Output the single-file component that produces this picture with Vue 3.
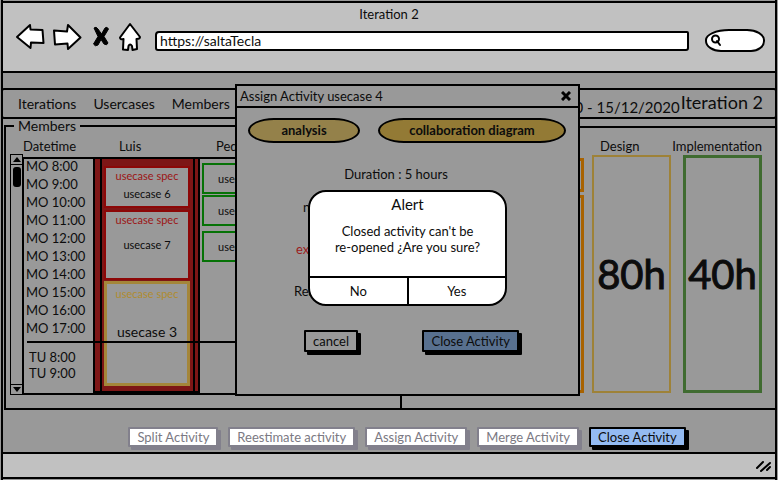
<script setup>
import { ref } from 'vue'

const url = ref('https://saltaTecla')
const query = ref('')

const links = ['Iterations', 'Usercases', 'Members']
const monday = [8, 9, 10, 11, 12, 13, 14, 15, 16, 17].map((h) => `MO ${h}:00`)
const tuesday = [8, 9].map((h) => `TU ${h}:00`)

const luis = [
  { kind: 'usecase spec', name: 'usecase 6', size: 'short' },
  { kind: 'usecase spec', name: 'usecase 7', size: 'medium' },
  { kind: 'usecase spec', name: 'usecase 3', size: 'long' },
]
const pedro = ['usecase 1', 'usecase 2', 'usecase 5']

const actions = [
  { label: 'Split Activity', enabled: false },
  { label: 'Reestimate activity', enabled: false },
  { label: 'Assign Activity', enabled: false },
  { label: 'Merge Activity', enabled: false },
  { label: 'Close Activity', enabled: true },
]
</script>

<template>
  <div class="window">
    <header class="chrome">
      <h1 class="chrome-title">Iteration 2</h1>
      <div class="toolbar">
        <button class="icon" type="button" aria-label="Back">
          <svg width="30" height="28" viewBox="0 0 30 28">
            <path d="M2 14 L15 2 L15.500 6.500 L27.500 7 L28.500 20 L16 19.500 L15.500 25 Z" />
          </svg>
        </button>
        <button class="icon" type="button" aria-label="Forward">
          <svg width="30" height="28" viewBox="0 0 30 28">
            <path d="M2 7.500 L15 8.500 L16 2 L28.500 14.500 L16 26 L15.500 20.500 L3 21.500 Z" />
          </svg>
        </button>
        <button class="icon stop" type="button" aria-label="Stop">
          <svg width="18" height="28" viewBox="0 0 18 28">
            <path
              class="solid"
              d="M2 5 Q4 3 6 6 L9.500 11 L13 5 Q15 3 16.500 6 L12 13.500 L16 20 Q15 23 12 21 L9 16.500 L6 22 Q3 24 1.500 21 L6 13.500 Z"
            />
          </svg>
        </button>
        <button class="icon" type="button" aria-label="Home">
          <svg width="24" height="30" viewBox="0 0 24 30">
            <path
              d="M12 2 L22 15 Q22 17 18.500 17 L19 27 L14.500 28 L14 24 Q12 21 10.500 24 L10 28 L5 27.500 L5.500 17 Q2 18 2 15.500 Z"
            />
          </svg>
        </button>
        <input v-model="url" class="url" type="text" aria-label="Address" />
        <label class="search">
          <svg width="12" height="14" viewBox="0 0 12 14">
            <circle cx="5.500" cy="5" r="3.500" />
            <path d="M7 7 L10 11" />
          </svg>
          <input v-model="query" type="search" aria-label="Search" />
        </label>
      </div>
    </header>

    <nav class="menu">
      <a v-for="link in links" :key="link" href="#">{{ link }}</a>
      <span class="dates">01/12/2020 - 15/12/2020</span>
      <strong class="iteration">Iteration 2</strong>
    </nav>

    <main class="panels">
      <fieldset class="members">
        <legend>Members</legend>
        <div class="heads">
          <span>Datetime</span>
          <span class="center">Luis</span>
          <span class="third">Pedro</span>
        </div>
        <div class="schedule">
          <div class="scrollbar">
            <span class="cap"><span class="arrow"></span></span>
            <span class="thumb"></span>
            <span class="cap bottom"><span class="arrow down"></span></span>
          </div>
          <div class="calendar">
            <div class="times">
              <ul class="monday">
                <li v-for="t in monday" :key="t">{{ t }}</li>
              </ul>
              <ul class="tuesday">
                <li v-for="t in tuesday" :key="t">{{ t }}</li>
              </ul>
            </div>
            <div class="luis">
              <div class="lane">
                <div v-for="c in luis" :key="c.name" class="card" :class="c.size">
                  <span class="kind">{{ c.kind }}</span>
                  <span class="name">{{ c.name }}</span>
                </div>
              </div>
            </div>
            <div class="pedro">
              <div v-for="p in pedro" :key="p" class="slot">{{ p }}</div>
            </div>
            <hr class="daybreak" />
          </div>
        </div>
      </fieldset>

      <section class="hours">
        <div class="stage analysis">
          <div class="bar first"></div>
          <div class="bar"></div>
        </div>
        <div class="stage design">
          <h2>Design</h2>
          <div class="total">80h</div>
        </div>
        <div class="stage implementation">
          <h2>Implementation</h2>
          <div class="total">40h</div>
        </div>
      </section>
    </main>

    <div class="actions">
      <button
        v-for="a in actions"
        :key="a.label"
        type="button"
        class="button"
        :class="{ primary: a.enabled }"
        :disabled="!a.enabled"
      >
        {{ a.label }}
      </button>
    </div>

    <footer class="status">
      <svg width="18" height="14" viewBox="0 0 18 14">
        <path d="M2 9 L8 3 M6 12 L15 4 M12 11 L15 8" />
      </svg>
    </footer>

    <section class="dialog" role="dialog" aria-labelledby="dialog-title">
      <header class="dialog-head">
        <h2 id="dialog-title">Assign Activity usecase 4</h2>
        <button class="close" type="button" aria-label="Close">
          <svg width="10" height="10" viewBox="0 0 10 10"><path d="M1 1 L9 9 M9 1 L1 9" /></svg>
        </button>
      </header>
      <div class="tags">
        <span class="tag">analysis</span>
        <span class="tag wide">collaboration diagram</span>
      </div>
      <p class="duration">Duration : 5 hours</p>
      <dl class="facts">
        <dt class="inset">name</dt>
        <dt class="expired">extra</dt>
        <dt>Real</dt>
      </dl>
      <div class="dialog-actions">
        <button class="button dim" type="button">cancel</button>
        <button class="button dim blue" type="button">Close Activity</button>
      </div>

      <div class="alert" role="alertdialog" aria-labelledby="alert-title">
        <h3 id="alert-title">Alert</h3>
        <p>Closed activity can't be<br />re-opened ¿Are you sure?</p>
        <div class="choices">
          <button type="button">No</button>
          <button type="button">Yes</button>
        </div>
      </div>
    </section>
  </div>
</template>

<style>
body {
  margin: 0;
  background: #999;
}
</style>

<style scoped>
* {
  box-sizing: border-box;
}

h1, h2, h3, p, ul, dl {
  margin: 0;
  padding: 0;
  font-weight: 400;
}

ul {
  list-style: none;
}

button, input {
  font: inherit;
  color: inherit;
}

.window {
  position: relative;
  display: flex;
  flex-direction: column;
  min-height: 100vh;
  margin: 0 1px;
  padding: 1px 0;
  border: solid #000;
  border-width: 0 2px;
  background: #999;
  color: #0c0c0c;
  font: 13px/16px Lato, "Liberation Sans", sans-serif;
}

.chrome {
  height: 72px;
  padding-top: 3px;
  border: solid #000;
  border-width: 2px 0;
  background: #c1c1c1;
}

.chrome-title {
  font-size: 13px;
  line-height: 16px;
  text-align: center;
}

.toolbar {
  display: flex;
  align-items: center;
  height: 30px;
  padding: 0 10px 0 12px;
}

.icon {
  display: flex;
  margin-right: 7px;
  padding: 0;
  border: 0;
  background: none;
}

.icon.stop {
  margin: 0 8px 0 3px;
}

.icon path {
  fill: #fff;
  stroke: #000;
  stroke-width: 2;
  stroke-linejoin: round;
}

.icon path.solid {
  fill: #000;
  stroke-width: 1;
}

.url {
  flex: 1;
  min-width: 0;
  height: 20px;
  margin: 7px 16px 0 6px;
  padding: 0 3px;
  border: 2px solid #000;
  border-radius: 4px 2px 3px 3px;
  background: #fff;
  font-size: 14px;
}

.search {
  display: flex;
  align-items: center;
  width: 60px;
  height: 23px;
  margin-top: 7px;
  padding-left: 3px;
  border: 2px solid #000;
  border-radius: 24px 18px 14px 16px / 11px;
  background: #fff;
}

.search svg {
  flex: none;
  fill: none;
  stroke: #000;
  stroke-width: 2;
  stroke-linecap: round;
}

.search input {
  width: 100%;
  min-width: 0;
  padding: 0;
  border: 0;
  outline: 0;
  background: none;
}

.menu {
  display: flex;
  align-items: center;
  gap: 17px;
  height: 31px;
  margin: 15px -2px 0;
  padding: 0 12px 0 15px;
  border: 2px solid #000;
  border-radius: 3px;
  font-size: 14px;
}

.menu a {
  color: inherit;
  text-decoration: none;
}

.dates {
  margin: 6px -16px 0 auto;
  font-size: 15px;
}

.iteration {
  margin-top: -4px;
  font-size: 18px;
  font-weight: 400;
}

.panels {
  display: grid;
  flex: 1;
  grid-template-columns: minmax(0, 396fr) minmax(0, 375fr);
  margin-left: 1px;
}

.members {
  display: flex;
  flex-direction: column;
  min-width: 0;
  margin: 0;
  padding: 5px 0 13px 4px;
  border: 2px solid #000;
  border-right: 0;
}

.members legend {
  margin-left: 4px;
  padding: 0 4px;
  font-size: 14px;
  line-height: 14px;
}

.heads {
  display: grid;
  grid-template-columns: 82px 106px 1fr;
  padding-left: 13px;
}

.center {
  padding-left: 14px;
}

.third {
  padding-left: 5px;
}

.schedule {
  display: flex;
  height: 241px;
}

.scrollbar {
  display: flex;
  flex-direction: column;
  align-items: center;
  width: 13px;
  border: 1px solid #000;
}

.cap {
  display: grid;
  width: 100%;
  height: 10px;
  place-items: center;
  border-bottom: 1px solid #000;
}

.cap.bottom {
  margin-top: auto;
  border-top: 1px solid #000;
  border-bottom: 0;
}

.arrow {
  border: 4px solid transparent;
  border-top: 0;
  border-bottom: 5px solid #000;
}

.arrow.down {
  border-top: 5px solid #000;
  border-bottom: 0;
}

.thumb {
  width: 8px;
  height: 20px;
  margin-top: 2px;
  border-radius: 3px;
  background: #000;
}

.calendar {
  position: relative;
  flex: 1;
  display: flex;
  margin-top: 3px;
  border: solid #000;
  border-width: 2px 0 2px 1px;
}

.times {
  width: 69px;
  padding-left: 2px;
}

.times li {
  line-height: 14px;
}

.monday {
  display: grid;
  gap: 4px;
}

.tuesday {
  display: grid;
  gap: 2px;
  margin-top: 15px;
  padding-left: 3px;
}

.luis {
  display: flex;
  width: 107px;
  padding: 0 3px 0 5px;
  border: 2px solid #000;
  border-width: 0 2px 2px;
  background: #7d1616;
}

.lane {
  flex: 1;
  padding: 7px 3px 0 2px;
  border: solid #000;
  border-width: 0 2px;
}

.card {
  display: flex;
  flex-direction: column;
  align-items: center;
  border: 2px solid #8c0707;
  background: #999;
  font-size: 11px;
}

.card.short {
  height: 42px;
  gap: 2px;
  margin-bottom: 2px;
}

.card.medium {
  height: 70px;
  gap: 9px;
  margin-bottom: 1px;
}

.card.long {
  height: 105px;
  gap: 22px;
  border: 3px solid #a4863a;
}

.kind {
  color: #9c1515;
}

.card.long .kind {
  padding-top: 2px;
  color: #b08c30;
}

.card.long .name {
  font-size: 14px;
}

.pedro {
  flex: 1;
  padding: 4px 100px 0 2px;
}

.slot {
  height: 31px;
  margin-bottom: 1px;
  padding: 6px 14px;
  border: 2px solid #067206;
  font-size: 11px;
  white-space: nowrap;
}

.slot:last-child {
  margin-top: 5px;
}

.daybreak {
  position: absolute;
  top: 182px;
  left: 3px;
  right: 0;
  margin: 0;
  border: 0;
  border-top: 2px solid #000;
}

.hours {
  display: flex;
  min-width: 0;
  margin-top: 7px;
  padding: 10px 13px 15px 90px;
  border: 2px solid #000;
  border-right: 0;
}

.stage {
  display: flex;
  flex-direction: column;
  width: 79px;
  margin-left: 12px;
}

.stage h2 {
  margin-bottom: 1px;
  padding-left: 8px;
  font-size: 13px;
  line-height: 16px;
  white-space: nowrap;
}

.stage.implementation h2 {
  align-self: flex-end;
  padding: 0;
}

.total {
  flex: 1;
  display: flex;
  align-items: center;
  justify-content: center;
  border: 2px solid #9e8238;
  font-size: 40px;
  -webkit-text-stroke: 1px #0c0c0c;
}

.implementation .total {
  border-width: 3px;
  border-color: #3f6b30;
}

.stage.analysis {
  flex: 1;
  gap: 3px;
  margin: 20px -4px 0 0;
}

.bar {
  flex: 1;
  border: 3px solid #a86200;
}

.bar.first {
  flex: none;
  height: 34px;
}

.actions {
  display: flex;
  justify-content: center;
  gap: 10px;
  padding: 17px 0 5px 36px;
}

.button {
  height: 20px;
  padding: 0 7px;
  border: 2px solid #000;
  border-radius: 1px;
  background: #fff;
  box-shadow: 3px 3px 0 #000;
  line-height: 16px;
  white-space: nowrap;
}

.button:disabled {
  border-color: #82808c;
  box-shadow: 3px 3px 0 #82808c;
  color: #7b7983;
}

.button.primary {
  background: #94bbf2;
}

.button.dim {
  height: 22px;
  background: #999;
}

.button.blue {
  background: #58708f;
}

.status {
  display: flex;
  align-items: center;
  justify-content: flex-end;
  height: 27px;
  padding-right: 2px;
  border: solid #000;
  border-width: 2px 0;
  background: #c1c1c1;
}

.status svg {
  fill: none;
  stroke: #000;
  stroke-width: 2;
  stroke-linecap: round;
}

.dialog {
  position: absolute;
  top: 84px;
  left: calc(50% - 154px);
  width: 345px;
  height: 312px;
  border: 2px solid #000;
  background: #999;
}

.dialog-head {
  display: flex;
  align-items: center;
  justify-content: space-between;
  height: 22px;
  padding: 0 7px 0 3px;
  border-bottom: 2px solid #000;
}

.dialog-head h2 {
  font-size: 13px;
}

.close {
  display: flex;
  padding: 0;
  border: 0;
  background: none;
}

.close path {
  stroke: #000;
  stroke-width: 3;
}

.tags {
  display: flex;
  justify-content: space-between;
  padding: 10px 12px 0 11px;
}

.tag {
  width: 112px;
  height: 25px;
  border: 2px solid #000;
  border-radius: 26px / 50%;
  background: #94814a;
  font-weight: 700;
  line-height: 20px;
  text-align: center;
}

.tag.wide {
  width: 188px;
  background: #937a35;
}

.duration {
  padding: 23px 23px 0 0;
  text-align: center;
}

.facts {
  display: grid;
  gap: 26px;
  padding: 17px 0 0 57px;
}

.inset {
  padding-left: 9px;
}

.expired {
  padding-left: 2px;
  color: #9c1c1c;
}

.dialog-actions {
  display: flex;
  justify-content: space-between;
  padding: 31px 59px 0 67px;
}

.alert {
  position: absolute;
  top: 104px;
  left: 71px;
  display: flex;
  flex-direction: column;
  width: 199px;
  height: 116px;
  overflow: hidden;
  border: 2px solid #000;
  border-radius: 18px;
  background: #fff;
  text-align: center;
}

.alert h3 {
  padding: 4px 0 11px;
  font-size: 15px;
  line-height: 16px;
}

.choices {
  display: flex;
  height: 28px;
  margin-top: auto;
  border-top: 2px solid #000;
}

.choices button {
  flex: 1;
  padding: 0;
  border: 0;
  background: none;
}

.choices button + button {
  border-left: 2px solid #000;
}
</style>
